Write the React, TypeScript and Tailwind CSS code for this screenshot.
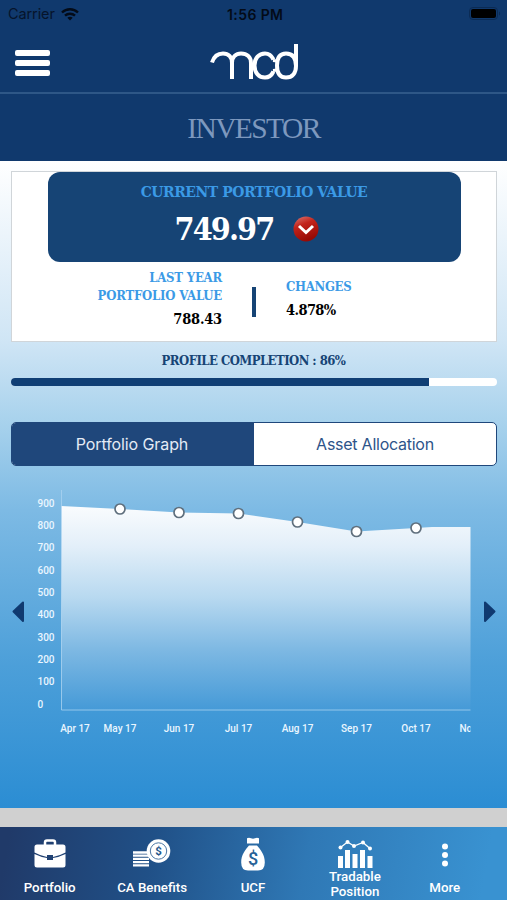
const slab = "font-['Roboto_Slab','DejaVu_Serif_Condensed','DejaVu_Serif',serif]"

const points = [
  { label: 'Apr 17', x: 75, y: 506 },
  { label: 'May 17', x: 120, y: 509 },
  { label: 'Jun 17', x: 179, y: 512.5 },
  { label: 'Jul 17', x: 238.5, y: 513.5 },
  { label: 'Aug 17', x: 297.5, y: 522 },
  { label: 'Sep 17', x: 356.5, y: 531.5 },
  { label: 'Oct 17', x: 416, y: 528 },
]

const yLabels = [900, 800, 700, 600, 500, 400, 300, 200, 100, 0]

const StatusBar = () => (
  <div className="relative flex h-7 items-center justify-between pl-2 pr-[6px] text-[14.5px] text-[#06142b]">
    <div className="flex items-center gap-1.5">
      <span className="tracking-[-0.1px]">Carrier</span>
      <svg width="18" height="13" viewBox="0 0 18 13" fill="none" stroke="#030b18" strokeWidth="2.4">
        <path d="M1 4.5C5.5.1 12.5.1 17 4.5M4 7.7c2.8-2.7 7.2-2.7 10 0" />
        <path d="M9 12.5 6.3 9.7c1.5-1.3 3.9-1.3 5.4 0z" fill="#030b18" stroke="none" />
      </svg>
    </div>
    <span className="absolute left-[227px] text-[14px] font-semibold tracking-[0.4px] text-[#030b18]">1:56 PM</span>
    <svg width="32" height="14" viewBox="0 0 32 14">
      <rect x="0.5" y="0.5" width="28" height="12" rx="3.5" fill="none" stroke="#0b2b54" />
      <rect x="2" y="2" width="25" height="9" rx="2" fill="#000" />
      <path d="M30 4.5c1.5.5 1.5 3.5 0 4z" fill="#0b2b54" />
    </svg>
  </div>
)

const Header = () => (
  <header className="h-[161px] bg-[#10396d]">
    <StatusBar />
    <div className="relative flex h-[66px] justify-center border-b-2 border-[#2e5787]">
      <button className="absolute left-[15px] top-[22px] flex flex-col gap-[4.5px]" aria-label="Menu">
        <span className="h-[5.5px] w-[35px] rounded-[2px] bg-white" />
        <span className="h-[5.5px] w-[35px] rounded-[2px] bg-white" />
        <span className="h-[5.5px] w-[35px] rounded-[2px] bg-white" />
      </button>
      <svg className="mt-4" width="88" height="37" viewBox="0 0 88 37" fill="none" stroke="#fff" strokeWidth="4">
        <path d="M2 18.5C4 12 8.5 9.5 13 9.5C18.5 9.5 22 13 22 19V35M22 19C22 13 26 9.5 31 9.5C37 9.5 41 13 41 19V35" />
        <path d="M63.5 15.5C61.5 11.5 58.5 9.5 55 9.5C49 9.5 44.5 14 44.5 21.5C44.5 29 49 33.5 55 33.5C58.5 33.5 61.5 31.5 63.5 27.5" />
        <path d="M86 0V22C86 29 82.5 33.5 76 33.5C70 33.5 67 29 67 21.5C67 14 70 9.5 76 9.5C82.5 9.5 86 14 86 22" />
        <path d="M63 16.5 67.5 17M63 26.5 67.5 26" strokeWidth="3" />
      </svg>
    </div>
    <h1 className="flex h-[69px] items-center justify-center font-['Liberation_Serif',serif] text-[29.5px] tracking-[-1.6px] text-[#7d98be]">
      INVESTOR
    </h1>
  </header>
)

const PortfolioCard = () => (
  <section className="ml-[11px] mr-[10px] h-[171px] border border-[#d0d5d9] bg-white">
    <div className="mx-[35.5px] flex h-[90px] flex-col items-center rounded-xl bg-[#164475]">
      <h2 className={`${slab} mt-[9px] h-[22px] whitespace-nowrap text-[15.5px] font-bold leading-[22px] tracking-[-0.45px] text-[#3b9ae6]`}>
        CURRENT PORTFOLIO VALUE
      </h2>
      <div className="flex h-[52px] items-center gap-5 pr-[14px]">
        <span className={`${slab} text-[32px] font-bold leading-none tracking-[-1.9px] text-white`}>749.97</span>
        <svg width="26" height="26" viewBox="0 0 26 26">
          <defs>
            <linearGradient id="red" x1="0" y1="0" x2="0.4" y2="1">
              <stop offset="0" stopColor="#dc7a75" />
              <stop offset="0.4" stopColor="#c3241b" />
              <stop offset="1" stopColor="#970a05" />
            </linearGradient>
          </defs>
          <circle cx="13" cy="13" r="12.5" fill="url(#red)" />
          <path d="M6 10 13 16.5l7-6.5" fill="none" stroke="#fff" strokeWidth="3" />
        </svg>
      </div>
    </div>
    <div className={`${slab} flex font-bold`}>
      <div className="mt-[7px] w-[210px] text-right text-[13px] leading-[17.5px] tracking-[-0.2px] text-[#3b9ae6]">
        <p>LAST YEAR</p>
        <p>PORTFOLIO VALUE</p>
        <p className="mt-1.5 text-[14.5px] text-black">788.43</p>
      </div>
      <div className="ml-[30px] mt-[25px] h-[30px] w-[4px] bg-[#164475]" />
      <div className="ml-[30px] mt-4 text-[13px] leading-[17.5px] tracking-[-0.3px] text-[#3b9ae6]">
        <p>CHANGES</p>
        <p className="mt-[5px] text-[14.5px] tracking-[-0.6px] text-black">4.878%</p>
      </div>
    </div>
  </section>
)

const Chart = () => (
  <svg className="block" width="507" height="270" viewBox="0 480 507 270">
    <defs>
      <linearGradient id="area" x1="0" y1="505" x2="0" y2="710" gradientUnits="userSpaceOnUse">
        <stop offset="0" stopColor="#fafcfe" />
        <stop offset="0.2" stopColor="#e3eff9" />
        <stop offset="0.45" stopColor="#b8d9f0" />
        <stop offset="0.7" stopColor="#7fb9e3" />
        <stop offset="1" stopColor="#459ad7" />
      </linearGradient>
      <clipPath id="plot">
        <rect x="55" y="485" width="415.5" height="260" />
      </clipPath>
    </defs>
    <path d="M61 506 120 509l59 3.5 59.5 1 59 8.5 59 9.5 59.5-3.5 16-1h38.5v182.5H61z" fill="url(#area)" />
    <path d="M61.5 490V710H470.5" fill="none" stroke="#a9d2f0" strokeOpacity="0.8" />
    {points.slice(1).map((p) => (
      <circle key={p.label} cx={p.x} cy={p.y} r="5" fill="#fff" stroke="#5f6f7d" strokeWidth="1.7" />
    ))}
    <g fill="#eaf6ff" fontFamily="Roboto, sans-serif" fontSize="10" fontWeight="500">
      {yLabels.map((n, i) => (
        <text key={n} x="37.5" y={506.5 + i * 22.37}>{n}</text>
      ))}
      <g clipPath="url(#plot)" textAnchor="middle">
        {points.map((p) => (
          <text key={p.label} x={p.x} y="731.5">{p.label}</text>
        ))}
        <text x="459.5" y="731.5" textAnchor="start">Nov 17</text>
      </g>
    </g>
    <path d="M13.5 611.5 23 602.5V621z" fill="#103a70" stroke="#103a70" strokeWidth="2" strokeLinejoin="round" />
    <path d="M494.5 611.5 485 602.5V621z" fill="#103a70" stroke="#103a70" strokeWidth="2" strokeLinejoin="round" />
  </svg>
)

const BottomNav = () => (
  <nav className="grid h-[73px] grid-cols-5 bg-[linear-gradient(100deg,#203a69_2%,#205087_30%,#2f78b5_60%,#3992d1_95%)] text-center text-[13.3px] font-medium leading-[15px] text-white">
    <a className="flex flex-col items-center pr-[2px] pt-[11px]">
      <svg width="32" height="30" viewBox="0 0 32 30" fill="#fff">
        <path d="M11 7V4.5Q11 2.5 13 2.5H19Q21 2.5 21 4.5V7" fill="none" stroke="#fff" strokeWidth="2.5" />
        <path d="M3 6.5H29Q31.5 6.5 31.5 9V14.5Q25 18 19 19V17H13V19Q7 18 .5 14.5V9Q.5 6.5 3 6.5Z" />
        <path d="M.5 16Q7 19.2 13 20V22H19V20Q25 19.2 31.5 16V27Q31.5 29.5 29 29.5H3Q.5 29.5.5 27Z" />
      </svg>
      <span className="mt-3">Portfolio</span>
    </a>
    <a className="flex flex-col items-center pt-[10px]">
      <svg width="38" height="31" viewBox="0 0 38 31">
        <path d="M0 15.5h16M0 18.7h16M0 21.9h16M0 25.1h16M0 28.3h16" stroke="#fff" strokeWidth="2.3" />
        <circle cx="25.5" cy="14" r="11.8" fill="#fff" />
        <circle cx="25.5" cy="14" r="8.2" fill="none" stroke="#4b76a3" />
        <text x="25.5" y="18.2" textAnchor="middle" fontFamily="Roboto, sans-serif" fontSize="11.5" fontWeight="700" fill="#24578c">$</text>
      </svg>
      <span className="mt-3 whitespace-nowrap">CA Benefits</span>
    </a>
    <a className="flex flex-col items-center pr-px pt-[10px]">
      <svg width="24" height="34" viewBox="0 0 24 34" fill="#fff">
        <path d="M6 1.3Q8 .3 10 1.3Q12 2 14 1.3Q16 .3 18 1.3V6.5H6ZM8 8.5h8C20 13 23.8 18 23.8 25.5Q23.8 33.5 17 33.5H7Q.2 33.5.2 25.5C.2 18 4 13 8 8.5Z" />
        <text x="12" y="27.5" textAnchor="middle" fontFamily="Roboto, sans-serif" fontSize="18" fontWeight="500" fill="#276297">$</text>
      </svg>
      <span className="mt-[9px]">UCF</span>
    </a>
    <a className="flex flex-col items-center pt-3">
      <svg width="36" height="30" viewBox="0 0 36 30" fill="#fff">
        <path d="M1 17h5v12H1zM8 11h5v18H8zM15.5 15h5v14h-5zM23 11h5v18h-5zM30.5 17h5v12h-5z" />
        <path d="M3.5 8.5 10.5 3 17 7l9-3.5 7 6" fill="none" stroke="#fff" strokeWidth="1.3" />
        <circle cx="3.5" cy="8.5" r="2" />
        <circle cx="10.5" cy="3" r="2" />
        <circle cx="17" cy="7" r="2" />
        <circle cx="26" cy="3.5" r="2" />
        <circle cx="33" cy="9.5" r="2" />
      </svg>
      <span>Tradable<br />Position</span>
    </a>
    <a className="flex flex-col items-center pr-[23px] pt-4">
      <svg width="8" height="24" viewBox="0 0 8 24" fill="#fff">
        <circle cx="4" cy="3.5" r="3" />
        <circle cx="4" cy="12" r="3" />
        <circle cx="4" cy="20.5" r="3" />
      </svg>
      <span className="mt-[13px]">More</span>
    </a>
  </nav>
)

const App = () => {
  return (
    <div className="flex h-[900px] w-[507px] flex-col overflow-hidden bg-[#d0d0d0] font-['Inter',sans-serif]">
      <Header />
      <main className="h-[647px] bg-[linear-gradient(180deg,#fff_0%,#cfe5f5_28%,#a6d1ec_41%,#7dbae4_54%,#4c9fd9_78%,#2b8dd3_100%)] pt-[10px]">
        <PortfolioCard />
        <p className={`${slab} mt-2.5 h-[18px] text-center text-[13px] font-bold leading-[18px] tracking-[-0.55px] text-[#164475]`}>
          PROFILE COMPLETION : 86%
        </p>
        <div className="ml-[11px] mr-[10px] mt-2 h-2 overflow-hidden rounded bg-white">
          <div className="h-full w-[86%] bg-[#103f75]" />
        </div>
        <div className="ml-[11px] mr-[10px] mt-9 grid h-[44px] grid-cols-2 overflow-hidden rounded-[5px] border border-[#1f477b] bg-white text-base">
          <button className="bg-[#1f477b] pr-0.5 tracking-[-0.1px] text-[#e4ebf5]">Portfolio Graph</button>
          <button className="tracking-[-0.25px] text-[#2d5489]">Asset Allocation</button>
        </div>
        <div className="mt-[14px]">
          <Chart />
        </div>
      </main>
      <div className="h-[19px] bg-[#d0d0d0]" />
      <div className="font-['Roboto',sans-serif]">
        <BottomNav />
      </div>
    </div>
  )
}

export default App
